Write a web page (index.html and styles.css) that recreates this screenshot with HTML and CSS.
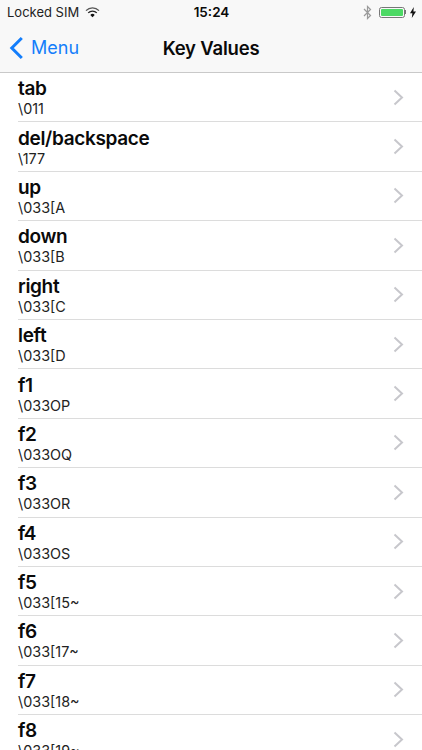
FILE: index.html
```html
<!DOCTYPE html>
<html lang="en">
<head>
    <meta charset="UTF-8">
    <meta name="viewport" content="width=device-width, initial-scale=1.0">
    <title>Key Values</title>
    <link rel="stylesheet" href="styles.css">
</head>
<body>
    <header class="top-bar">
        <div class="status-bar">
            <div class="status-left">
                <span>Locked SIM</span>
                <svg class="wifi" width="15" height="11" viewBox="0 0 15 11">
                    <path d="M1 3.6a9.2 9.2 0 0 1 13 0" fill="none" stroke="#555" stroke-width="1.3"/>
                    <path d="M3.2 5.9a6 6 0 0 1 8.6 0" fill="none" stroke="#222" stroke-width="1.3"/>
                    <path d="M5.3 8a3 3 0 0 1 4.4 0L7.5 10.2z" fill="#111"/>
                </svg>
            </div>
            <div class="status-time">15:24</div>
            <div class="status-right">
                <svg width="9" height="15" viewBox="0 0 9 15">
                    <path d="M1 4l6.5 6.5L4.5 13.5V1.500L7.500 4.500L1 11" fill="none" stroke="#9a9a9a" stroke-width="1.2"/>
                </svg>
                <div class="battery"><div class="battery-fill"></div></div>
                <div class="battery-tip"></div>
                <svg width="6" height="11" viewBox="0 0 6 11">
                    <path d="M3.800 0L0 6.300h2.400L1.800 11 6 4.500H3.400z" fill="#111"/>
                </svg>
            </div>
        </div>
        <nav class="nav-bar">
            <div class="nav-back">
                <svg width="15" height="24" viewBox="0 0 15 24">
                    <path d="M12.800 2L2.800 12l10 10" fill="none" stroke="#147efb" stroke-width="3"/>
                </svg>
                <span>Menu</span>
            </div>
            <div class="nav-title">Key Values</div>
        </nav>
    </header>

    <ul class="key-list">
        <li class="key-row"><div class="key-text"><div class="key-name">tab</div><div class="key-code">\011</div></div><svg class="chevron" width="11" height="17" viewBox="0 0 11 17"><path d="M1.500 1.500l7.500 7-7.500 7" fill="none" stroke="#c7c7cc" stroke-width="2"/></svg></li>
        <li class="key-row"><div class="key-text"><div class="key-name">del/backspace</div><div class="key-code">\177</div></div><svg class="chevron" width="11" height="17" viewBox="0 0 11 17"><path d="M1.500 1.500l7.500 7-7.500 7" fill="none" stroke="#c7c7cc" stroke-width="2"/></svg></li>
        <li class="key-row"><div class="key-text"><div class="key-name">up</div><div class="key-code">\033[A</div></div><svg class="chevron" width="11" height="17" viewBox="0 0 11 17"><path d="M1.500 1.500l7.500 7-7.500 7" fill="none" stroke="#c7c7cc" stroke-width="2"/></svg></li>
        <li class="key-row"><div class="key-text"><div class="key-name">down</div><div class="key-code">\033[B</div></div><svg class="chevron" width="11" height="17" viewBox="0 0 11 17"><path d="M1.500 1.500l7.500 7-7.500 7" fill="none" stroke="#c7c7cc" stroke-width="2"/></svg></li>
        <li class="key-row"><div class="key-text"><div class="key-name">right</div><div class="key-code">\033[C</div></div><svg class="chevron" width="11" height="17" viewBox="0 0 11 17"><path d="M1.500 1.500l7.500 7-7.500 7" fill="none" stroke="#c7c7cc" stroke-width="2"/></svg></li>
        <li class="key-row"><div class="key-text"><div class="key-name">left</div><div class="key-code">\033[D</div></div><svg class="chevron" width="11" height="17" viewBox="0 0 11 17"><path d="M1.500 1.500l7.500 7-7.500 7" fill="none" stroke="#c7c7cc" stroke-width="2"/></svg></li>
        <li class="key-row"><div class="key-text"><div class="key-name">f1</div><div class="key-code">\033OP</div></div><svg class="chevron" width="11" height="17" viewBox="0 0 11 17"><path d="M1.500 1.500l7.500 7-7.500 7" fill="none" stroke="#c7c7cc" stroke-width="2"/></svg></li>
        <li class="key-row"><div class="key-text"><div class="key-name">f2</div><div class="key-code">\033OQ</div></div><svg class="chevron" width="11" height="17" viewBox="0 0 11 17"><path d="M1.500 1.500l7.500 7-7.500 7" fill="none" stroke="#c7c7cc" stroke-width="2"/></svg></li>
        <li class="key-row"><div class="key-text"><div class="key-name">f3</div><div class="key-code">\033OR</div></div><svg class="chevron" width="11" height="17" viewBox="0 0 11 17"><path d="M1.500 1.500l7.500 7-7.500 7" fill="none" stroke="#c7c7cc" stroke-width="2"/></svg></li>
        <li class="key-row"><div class="key-text"><div class="key-name">f4</div><div class="key-code">\033OS</div></div><svg class="chevron" width="11" height="17" viewBox="0 0 11 17"><path d="M1.500 1.500l7.500 7-7.500 7" fill="none" stroke="#c7c7cc" stroke-width="2"/></svg></li>
        <li class="key-row"><div class="key-text"><div class="key-name">f5</div><div class="key-code">\033[15~</div></div><svg class="chevron" width="11" height="17" viewBox="0 0 11 17"><path d="M1.500 1.500l7.500 7-7.500 7" fill="none" stroke="#c7c7cc" stroke-width="2"/></svg></li>
        <li class="key-row"><div class="key-text"><div class="key-name">f6</div><div class="key-code">\033[17~</div></div><svg class="chevron" width="11" height="17" viewBox="0 0 11 17"><path d="M1.500 1.500l7.500 7-7.500 7" fill="none" stroke="#c7c7cc" stroke-width="2"/></svg></li>
        <li class="key-row"><div class="key-text"><div class="key-name">f7</div><div class="key-code">\033[18~</div></div><svg class="chevron" width="11" height="17" viewBox="0 0 11 17"><path d="M1.500 1.500l7.500 7-7.500 7" fill="none" stroke="#c7c7cc" stroke-width="2"/></svg></li>
        <li class="key-row"><div class="key-text"><div class="key-name">f8</div><div class="key-code">\033[19~</div></div><svg class="chevron" width="11" height="17" viewBox="0 0 11 17"><path d="M1.500 1.500l7.500 7-7.500 7" fill="none" stroke="#c7c7cc" stroke-width="2"/></svg></li>
    </ul>
</body>
</html>
```

FILE: styles.css
```css
html, body { height: 100%; overflow: hidden; }
body { margin: 0; background: white; color: #0a0a0a; font-family: Inter, "Liberation Sans", sans-serif; }

.top-bar { background: #f8f8f8; border-bottom: 1px solid #c9c9c9; height: 72px; box-sizing: content-box; }
.status-bar { display: grid; grid-template-columns: 1fr auto 1fr; align-items: center; height: 24px; padding: 0 6px 0 7px; font-size: 13px; }
.status-left { display: flex; align-items: center; gap: 6px; color: #222; }
.status-time { font-weight: 600; font-size: 13.5px; }
.status-right { display: flex; align-items: center; justify-content: flex-end; }
.status-right svg:first-child { margin-right: 7px; }
.battery { width: 22px; height: 7px; border: 1px solid #777; border-radius: 2.5px; padding: 1px; box-sizing: content-box; }
.battery-fill { height: 100%; background: #4cd964; border-radius: 1px; }
.battery-tip { width: 1.500px; height: 4px; background: #777; margin-right: 4px; }

.nav-bar { position: relative; display: flex; align-items: center; justify-content: center; height: 47px; }
.nav-back { position: absolute; left: 9px; top: 0; bottom: 0; display: flex; align-items: center; gap: 7px; color: #147efb; font-size: 18px; }
.nav-title { font-size: 18.500px; font-weight: 600; letter-spacing: -0.2px; }

.key-list { list-style: none; margin: 0; padding: 0 0 0 18px; }
.key-row { display: flex; align-items: center; justify-content: space-between; height: 49.400px; box-sizing: border-box; padding-right: 18px; border-bottom: 1px solid #dcdcdc; }
.key-text { padding-top: 1px; }
.key-name { font-size: 19px; font-weight: 600; line-height: 23px; letter-spacing: -0.33px; }
.key-code { font-size: 14.400px; line-height: 18px; color: #222; }
.chevron { flex: none; }
```
